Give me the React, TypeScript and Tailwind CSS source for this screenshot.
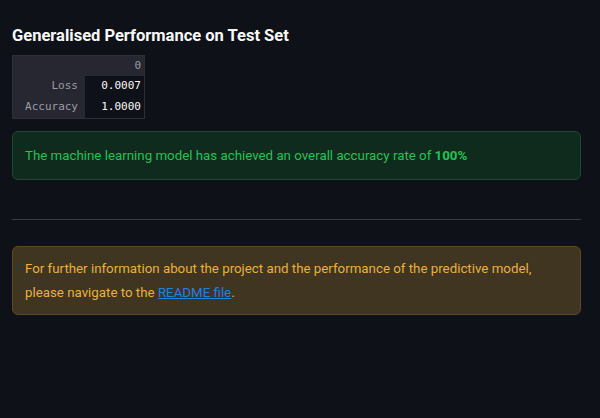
const sans = "font-['Roboto','Liberation_Sans',sans-serif]";
const mono = "font-['DejaVu_Sans_Mono','Liberation_Mono',monospace]";

const rows = [
  { label: "Loss", value: "0.0007" },
  { label: "Accuracy", value: "1.0000" },
];

function ResultsTable() {
  return (
    <div className={`w-[133px] bg-[#262730] border border-[#2c2e38] text-[11px] font-medium ${mono}`}>
      <div className="flex h-[20px]">
        <div className="w-[72px]" />
        <div className="flex-1 flex items-center justify-end pr-[3px] text-[#9a9ca6]">0</div>
      </div>
      {rows.map((r) => (
        <div key={r.label} className="flex h-[21px]">
          <div className="w-[72px] flex items-center justify-end pr-[7px] text-[#9a9ca6]">
            {r.label}
          </div>
          <div className="flex-1 flex items-center justify-end pr-[3px] bg-[#0e1117] text-[#fafafa]">
            {r.value}
          </div>
        </div>
      ))}
    </div>
  );
}

export default function App() {
  return (
    <div className={`w-[600px] h-[418px] bg-[#0e1117] pl-3 pr-[19px] pt-[25px] ${sans}`}>
      <h3 className="text-[16.5px] leading-[22px] font-bold text-[#fafafa] mb-2">
        Generalised Performance on Test Set
      </h3>
      <ResultsTable />
      <div className="mt-[12px] rounded-md border border-[#1b4a2c] bg-[#0f2b1e] px-3 h-[49px] flex items-center text-[13.3px] text-[#21c354]">
        <p>
          The machine learning model has achieved an overall accuracy rate of{" "}
          <span className="font-bold">100%</span>
        </p>
      </div>
      <hr className="mt-[39px] border-t border-[#3a3c45]" />
      <div className="mt-[26px] rounded-md border border-[#5b4a24] bg-[#3f3520] px-3 pt-[10px] pb-[9px] text-[13.3px] leading-[24px] text-[#ecb03b]">
        <p>
          For further information about the project and the performance of the predictive model,
          please navigate to the{" "}
          <a href="#" className="text-[#1c83e1] underline">README file</a>.
        </p>
      </div>
    </div>
  );
}
